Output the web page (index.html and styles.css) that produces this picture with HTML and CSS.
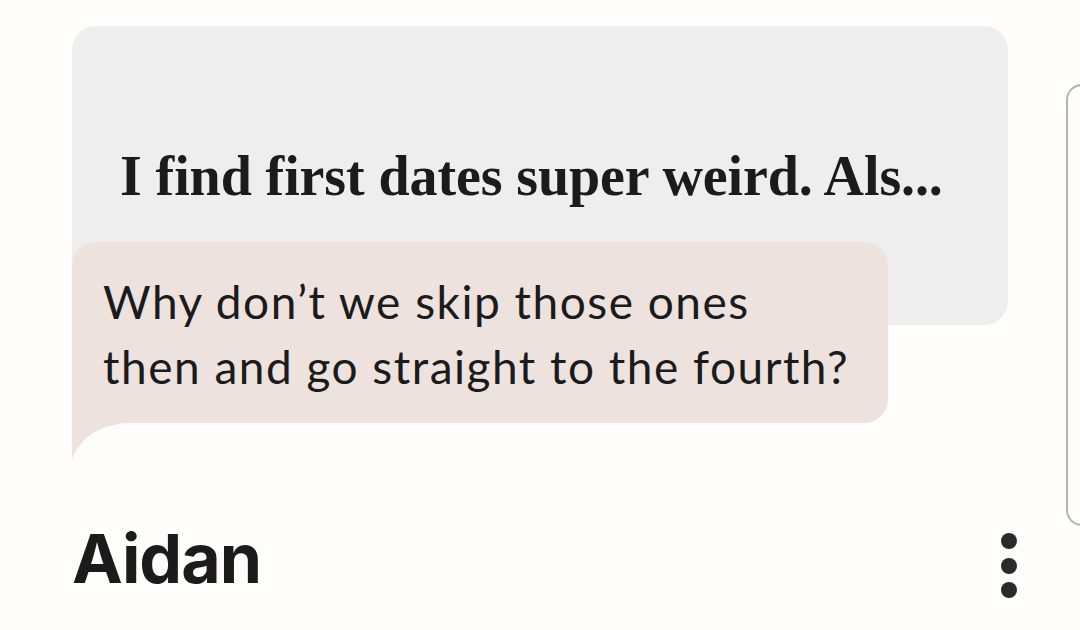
FILE: index.html
```html
<!DOCTYPE html>
<html lang="en">
<head>
<meta charset="utf-8">
<title>Aidan</title>
<link rel="stylesheet" href="styles.css">
</head>
<body>
<div class="screen">
  <main class="profile">
    <section class="prompt-card">
      <p class="prompt-text">I find first dates super weird. Als...</p>
    </section>
    <div class="reply">
      <p class="reply-text">Why don’t we skip those ones<br>then and go straight to the fourth?</p>
      <svg class="tail" width="60" height="36" viewBox="0 0 60 36" aria-hidden="true"><path d="M0 0 H58 C30 1 10 12 0 36 Z" fill="#ede2de"/></svg>
    </div>
    <div class="footer">
      <h1 class="name">Aidan</h1>
      <button class="more" aria-label="More options">
        <span class="dot"></span><span class="dot"></span><span class="dot"></span>
      </button>
    </div>
  </main>
  <aside class="next-card"></aside>
</div>
</body>
</html>
```

FILE: styles.css
```css
html, body {
  margin: 0;
  padding: 0;
  background: #fefdfb;
}
.screen {
  width: 1080px;
  height: 630px;
  display: flex;
  overflow: hidden;
}
.profile {
  flex: 0 0 1066px;
  box-sizing: border-box;
  padding: 26px 0 0 72px;
  display: flex;
  flex-direction: column;
}
.prompt-card {
  width: 936px;
  height: 299px;
  box-sizing: border-box;
  background: #eeeeee;
  border-radius: 24px;
  padding: 0 48px;
}
.prompt-text {
  margin: 0;
  padding-top: 118px;
  font-family: "Liberation Serif", serif;
  font-weight: 700;
  font-size: 56px;
  line-height: 64px;
  letter-spacing: -0.1px;
  color: #1b1b1b;
  white-space: nowrap;
}
.reply {
  position: relative;
  margin-top: -83px;
  width: 816px;
  height: 181px;
  box-sizing: border-box;
  background: #ede2de;
  border-radius: 24px 24px 24px 0;
  padding: 27px 0 0 31px;
}
.reply-text {
  margin: 0;
  font-family: "Lato", sans-serif;
  font-size: 46px;
  line-height: 65px;
  letter-spacing: 1.5px;
  color: #1b1b1b;
}
.tail {
  position: absolute;
  left: 0;
  top: 100%;
  display: block;
}
.footer {
  width: 946px;
  margin-top: 94px;
  display: flex;
  align-items: center;
  justify-content: space-between;
}
.name {
  margin: 0 0 0 0;
  font-family: "Inter", sans-serif;
  font-weight: 700;
  font-size: 68px;
  line-height: 80px;
  letter-spacing: -1px;
  color: #1b1b1b;
}
.more {
  border: 0;
  background: none;
  padding: 0;
  width: 17px;
  display: flex;
  flex-direction: column;
  gap: 8.5px;
  margin-top: 16px;
}
.dot {
  display: block;
  width: 16px;
  height: 16px;
  border-radius: 50%;
  background: #2a2a2a;
}
.next-card {
  flex: 0 0 60px;
  box-sizing: border-box;
  margin-top: 84px;
  height: 442px;
  border: 2px solid #b4b4b4;
  border-right: 0;
  border-radius: 16px 0 0 16px;
  background: #fefdfb;
}
```
